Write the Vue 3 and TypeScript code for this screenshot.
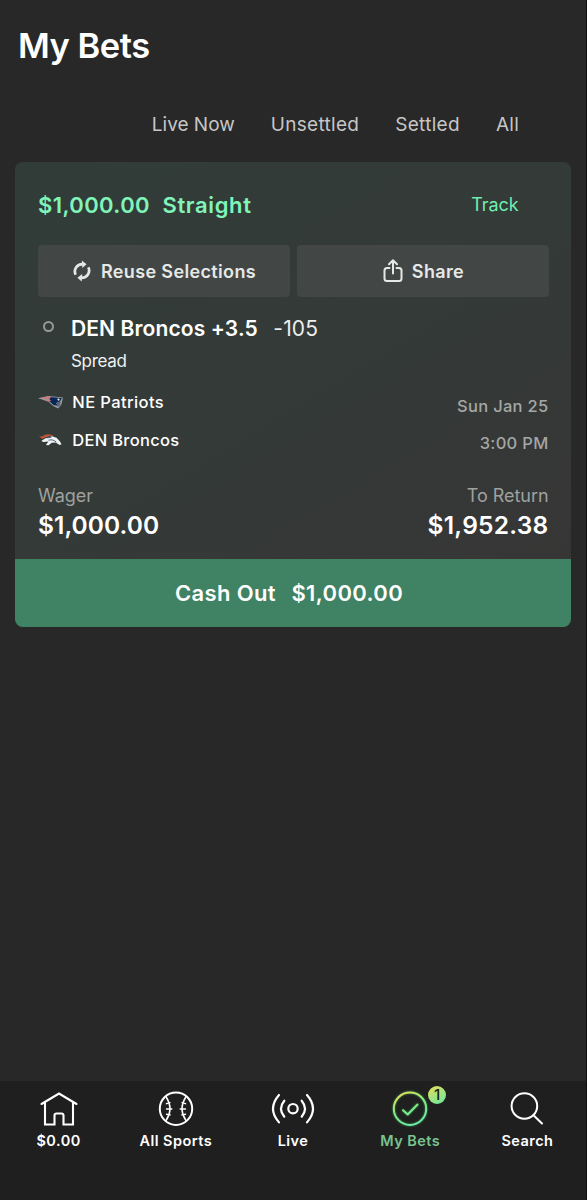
<script setup lang="ts">
interface Tab { label: string; tone: string }
const tabs: Tab[] = [
  { label: 'Live Now', tone: 'tight' },
  { label: 'Unsettled', tone: '' },
  { label: 'Settled', tone: '' },
  { label: 'All', tone: '' },
]
</script>

<template>
  <div class="app">
    <h1 class="title">My Bets</h1>
    <nav class="tabs">
      <a v-for="tab in tabs" :key="tab.label" class="tab" :class="tab.tone">{{ tab.label }}</a>
    </nav>

    <article class="card">
      <div class="card-body">
        <header class="bet-head">
          <div class="bet-type"><span>$1,000.00</span><span class="kind">Straight</span></div>
          <a class="track">Track</a>
        </header>

        <div class="actions">
          <button class="action">
            <svg class="reuse-icon" width="18" height="22" viewBox="0 0 18 22">
              <g fill="none" stroke="#e6e8e7" stroke-width="2.700">
                <path d="M2.600 14.700C.3 9.500 3.800 4.300 9.500 4.200" />
                <path d="M15.400 7.300c2.300 5.200-1.200 10.400-6.900 10.500" />
              </g>
              <path d="M8.800.4l4.800 3.800-4.300 3.700z M9.200 14.100l-4.800 3.700 4.300 3.800z" fill="#e6e8e7" />
            </svg>
            <span>Reuse Selections</span>
          </button>
          <button class="action">
            <svg class="share-icon" width="20" height="24" viewBox="0 0 20 24" fill="none" stroke="#e6e8e7" stroke-width="2" stroke-linecap="round" stroke-linejoin="round">
              <path d="M6.500 9H4a2.500 2.500 0 0 0-2.500 2.500v8A2.500 2.500 0 0 0 4 22h12a2.500 2.500 0 0 0 2.500-2.500v-8A2.500 2.500 0 0 0 16 9h-2.500M10 14.500V1.500M6 5.300l4-4 4 4" />
            </svg>
            <span>Share</span>
          </button>
        </div>

        <section class="selection">
          <i class="marker"></i>
          <div class="pick"><strong>DEN Broncos +3.5</strong><span>-105</span></div>
          <div class="market">Spread</div>
        </section>

        <section class="match">
          <div class="teams">
            <div class="team patriots">
              <svg width="26" height="16" viewBox="0 0 26 16">
                <path d="M0 4.200 10 2 25 3.500l-1.500 6.800-3.300 4.300-4.700-2.300-5-4.500z" fill="#929ba4" />
                <path d="M12 3l12 1.200-2.500 3.500-3.500 1.200 2 2.900-4.500-.8-4.300-4z" fill="#0b2554" />
                <path d="M1.200 4.200 10 2.500l3.500.6-2.800 1.800zM6 5.700l5.500-.2 2 1.200-3.500.2z" fill="#d5767a" />
                <path d="M18.500 9.100l4.300-1.700-1.200 4.100-1.800 1.700z" fill="#59656f" />
                <circle cx="20.500" cy="5.600" r="1.100" fill="#e5e9ec" />
              </svg>
              <span>NE Patriots</span>
            </div>
            <div class="team broncos">
              <svg width="26" height="16" viewBox="0 0 26 16">
                <path d="M1 4.500c3 .3 4-.5 6-1.700C10 1.500 14 2.200 16 4.200l-3.500-.4-6 2L4.500 7z" fill="#bd5438" />
                <path d="M3.300 9 7.500 6.300 14 4.200l4.500 1.600 3.500 3.800 1.500 2.700-1.800.7-4.200-2.500-3.800.2-3.200 2.500-2.600-.2 2.500-3.500-5 .6z" fill="#f0f3f5" />
                <path d="M10.500 8.200c3-.8 5.500-.3 7.800 1.900M8.500 5.900l4.800-.5" fill="none" stroke="#243d60" stroke-width=".8" />
              </svg>
              <span>DEN Broncos</span>
            </div>
          </div>
          <div class="when"><span>Sun Jan 25</span><span>3:00 PM</span></div>
        </section>

        <section class="money">
          <div><p class="caption">Wager</p><p class="amount">$1,000.00</p></div>
          <div class="return"><p class="caption">To Return</p><p class="amount wide">$1,952.38</p></div>
        </section>
      </div>
      <button class="cash-out"><span>Cash Out</span><span>$1,000.00</span></button>
    </article>

    <footer class="bottom-nav">
      <a class="item">
        <svg width="44" height="40" viewBox="0 0 44 40" fill="none" stroke="#fff" stroke-width="2.100" stroke-linejoin="miter" stroke-linecap="round">
          <path d="M4.500 17 22 6.500 39.500 17M8 15.500V37.500h9.500V28.500a2 2 0 0 1 2-2h5a2 2 0 0 1 2 2V37.500H36V15.500" />
        </svg>
        <span>$0.00</span>
      </a>
      <a class="item">
        <svg width="44" height="40" viewBox="0 0 44 40" fill="none" stroke="#fff" stroke-width="2" stroke-linecap="round">
          <circle cx="22" cy="21.700" r="16.200" />
          <path d="M12 9.700q8 12 0 24M32 9.700q-8 12 0 24" stroke-width="1.500" />
          <path d="M12.500 16.700l3.500-1M12.500 22h5.300M12.500 27.200l3.700.7M31.500 16.700l-3.500-1M31.500 22h-5.300M31.500 27.200l-3.700.7" stroke-width="1.400" />
        </svg>
        <span>All Sports</span>
      </a>
      <a class="item">
        <svg width="44" height="40" viewBox="0 0 44 40" fill="none" stroke="#fff" stroke-width="2.200" stroke-linecap="round">
          <circle cx="22" cy="21.700" r="4.700" />
          <path d="M13.300 13.700q-6.600 8 0 16M30.700 13.700q6.600 8 0 16M8 8q-12 13.700 0 27.400M36 8q12 13.700 0 27.400" />
        </svg>
        <span>Live</span>
      </a>
      <a class="item active">
        <svg width="44" height="40" viewBox="0 0 44 40" fill="none" stroke="url(#ring)" stroke-width="2" stroke-linecap="round" stroke-linejoin="round">
          <defs>
            <linearGradient id="ring" gradientUnits="userSpaceOnUse" x1="11" y1="7" x2="25" y2="38">
              <stop offset="0" stop-color="#e6df5a" />
              <stop offset=".5" stop-color="#7bec86" />
              <stop offset="1" stop-color="#6deba8" />
            </linearGradient>
          </defs>
          <circle cx="22" cy="21.700" r="16.200" />
          <path d="M15 23.200l4.700 4.300 9.800-10" />
        </svg>
        <b class="badge">1</b>
        <span>My Bets</span>
      </a>
      <a class="item">
        <svg width="44" height="40" viewBox="0 0 44 40" fill="none" stroke="#fff" stroke-width="2" stroke-linecap="round">
          <circle cx="19.400" cy="19" r="12.800" />
          <path d="M28.500 28.200l8.500 8.300" />
        </svg>
        <span>Search</span>
      </a>
    </footer>
  </div>
</template>

<style>
body { background: #282828; }
</style>

<style scoped>
* { box-sizing: border-box; }
.app {
  display: flex;
  flex-direction: column;
  height: 1200px;
  border-right: 1px solid #101010;
  background: #282828;
  color: #fff;
  font-family: Inter, Roboto, sans-serif;
  white-space: nowrap;
}
.title { margin: 26px 0 0 18px; font-size: 34.500px; font-weight: 600; line-height: 40px; letter-spacing: -.5px; }
.tabs { display: flex; gap: 36px; margin: 47px 0 0 151.800px; color: #c6c6c6; font-size: 19px; line-height: 24px; letter-spacing: .3px; }
.tab.tight { letter-spacing: 0; }
.card { width: 556px; height: 465px; margin: 25px 0 0 15px; border-radius: 8px; overflow: hidden; background: linear-gradient(149deg, #313c38 0%, #343a38 50%, #373535 100%); }
.card-body { height: 397px; padding: 27px 22.500px 0 23px; }
.bet-head { display: flex; justify-content: space-between; height: 56px; padding-right: 30px; }
.bet-type { display: flex; gap: 12.500px; color: #80f5ba; font-size: 22px; font-weight: 600; line-height: 32px; letter-spacing: .4px; }
.kind { letter-spacing: .65px; }
.track { color: #70edb0; font-size: 18px; line-height: 31px; letter-spacing: -.1px; }
.actions { display: grid; grid-template-columns: 252px 252px; gap: 7px; }
.action { display: flex; align-items: center; justify-content: center; height: 52px; padding: 0 0 0 1px; border: 0; border-radius: 4px; background: #424745; color: #e6e8e7; font: 600 18px/24px Inter, sans-serif; letter-spacing: .36px; }
.action span { padding-top: 1px; }
.reuse-icon { margin-right: 10px; }
.share-icon { margin-right: 9px; }
.selection { display: grid; grid-template-columns: 33px 1fr; height: 87px; padding-top: 15px; align-content: start; }
.marker { width: 11px; height: 11px; margin: 9px 0 0 5px; border: 2px solid #959a98; border-radius: 50%; }
.pick { display: flex; gap: 15.500px; padding-top: 1px; font-size: 21px; line-height: 32px; }
.pick strong { font-weight: 600; letter-spacing: .12px; }
.pick span { color: #eceeed; letter-spacing: .15px; }
.market { grid-column: 2; margin-top: 4px; font-size: 17px; line-height: 24px; letter-spacing: -.3px; color: #f0f2f1; }
.match { display: flex; justify-content: space-between; height: 100px; }
.team { display: flex; align-items: center; gap: 8.800px; height: 37.500px; font-size: 16.500px; font-weight: 500; letter-spacing: .4px; }
.patriots { margin-top: -.5px; }
.broncos { letter-spacing: .3px; }
.team svg { margin-left: -.500px; }
.when { display: flex; flex-direction: column; padding-top: 3.500px; align-items: flex-end; color: #a4a7a5; font-size: 16.500px; font-weight: 500; line-height: 37.500px; letter-spacing: .3px; }
.money { display: flex; justify-content: space-between; }
.return { text-align: right; }
.caption, .amount { margin: 0; }
.caption { color: #9ea29f; font-size: 18px; line-height: 24px; letter-spacing: -.05px; }
.amount { margin-top: 1px; font-size: 24.500px; font-weight: 600; line-height: 32px; letter-spacing: .05px; }
.wide { letter-spacing: .25px; }
.cash-out { display: flex; align-items: center; justify-content: center; gap: 15.500px; width: 100%; height: 68px; padding: 0 8px 1px 0; border: 0; background: #3f8264; color: #fff; font: 600 22px/30px Inter, sans-serif; letter-spacing: .36px; }
.bottom-nav { display: grid; grid-template-columns: repeat(5, 1fr); height: 119px; margin-top: auto; background: #1f1f1f; }
.item { position: relative; display: flex; flex-direction: column; align-items: center; padding-top: 6px; font-size: 14.500px; font-weight: 600; line-height: 20px; letter-spacing: .45px; }
.item svg { flex: none; overflow: visible; }
.item span { margin-top: 4px; }
.active { color: #78c48f; }
.active svg { filter: drop-shadow(0 0 1px #3c9955); }
.badge { position: absolute; top: 5px; left: calc(50% + 18px); width: 18px; height: 18px; border-radius: 50%; background: linear-gradient(150deg, #e8df59, #63e9a0); color: #181d18; font-size: 15px; font-weight: 500; line-height: 18px; letter-spacing: 0; text-align: center; }
</style>
